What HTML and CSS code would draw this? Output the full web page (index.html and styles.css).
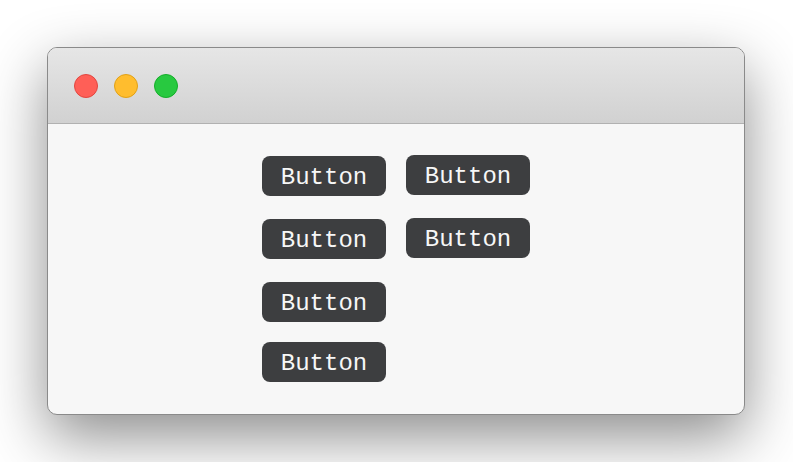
FILE: index.html
```html
<!DOCTYPE html>
<html>
<head>
<meta charset="utf-8">
<title>Buttons</title>
<link rel="stylesheet" href="styles.css">
</head>
<body>
	<section class="stage">
		<div class="window">
			<div class="titlebar">
				<span class="light red"></span>
				<span class="light yellow"></span>
				<span class="light green"></span>
			</div>
			<div class="content">
				<div class="col col_first">
					<button class="btn">Button</button>
					<button class="btn">Button</button>
					<button class="btn">Button</button>
					<button class="btn btn_tight">Button</button>
				</div>
				<div class="col">
					<button class="btn">Button</button>
					<button class="btn">Button</button>
				</div>
			</div>
		</div>
	</section>
</body>
</html>
```

FILE: styles.css
```css
html, body{ margin: 0; padding: 0; background: #fff; }

.stage{ padding: 47px 0 47px 47px; min-height: 462px; box-sizing: border-box; }

.window{
	width: 696px;
	height: 366px;
	border: 1px solid #8a8a8a;
	border-radius: 10px;
	overflow: hidden;
	background: #f7f7f7;
	box-shadow: 0 22px 60px rgba(0,0,0,0.45);
}

.titlebar{
	height: 76px;
	box-sizing: border-box;
	padding: 26px 0 0 26px;
	display: flex;
	gap: 16px;
	background: linear-gradient(#e6e6e6, #d1d1d1);
	border-bottom: 1px solid #b1b1b1;
}

.light{ width: 22px; height: 22px; border-radius: 50%; border: 1px solid; }
.red{ background: #ff5f57; border-color: #e2463f; }
.yellow{ background: #ffbd2e; border-color: #e1a116; }
.green{ background: #28c940; border-color: #14ae29; }

.content{
	display: flex;
	justify-content: center;
	align-items: flex-start;
	gap: 20px;
	padding-top: 31px;
}

.col{ display: flex; flex-direction: column; gap: 23px; }
.col_first{ padding-top: 1px; }

.btn{
	width: 124px;
	height: 40px;
	border: 0;
	border-radius: 8px;
	background: #3d3e40;
	color: #f7f7f7;
	font-family: "Liberation Mono", "DejaVu Sans Mono", monospace;
	font-size: 24px;
	padding: 2px 0 0;
	cursor: pointer;
}
.btn_tight{ margin-top: -3px; }
```
